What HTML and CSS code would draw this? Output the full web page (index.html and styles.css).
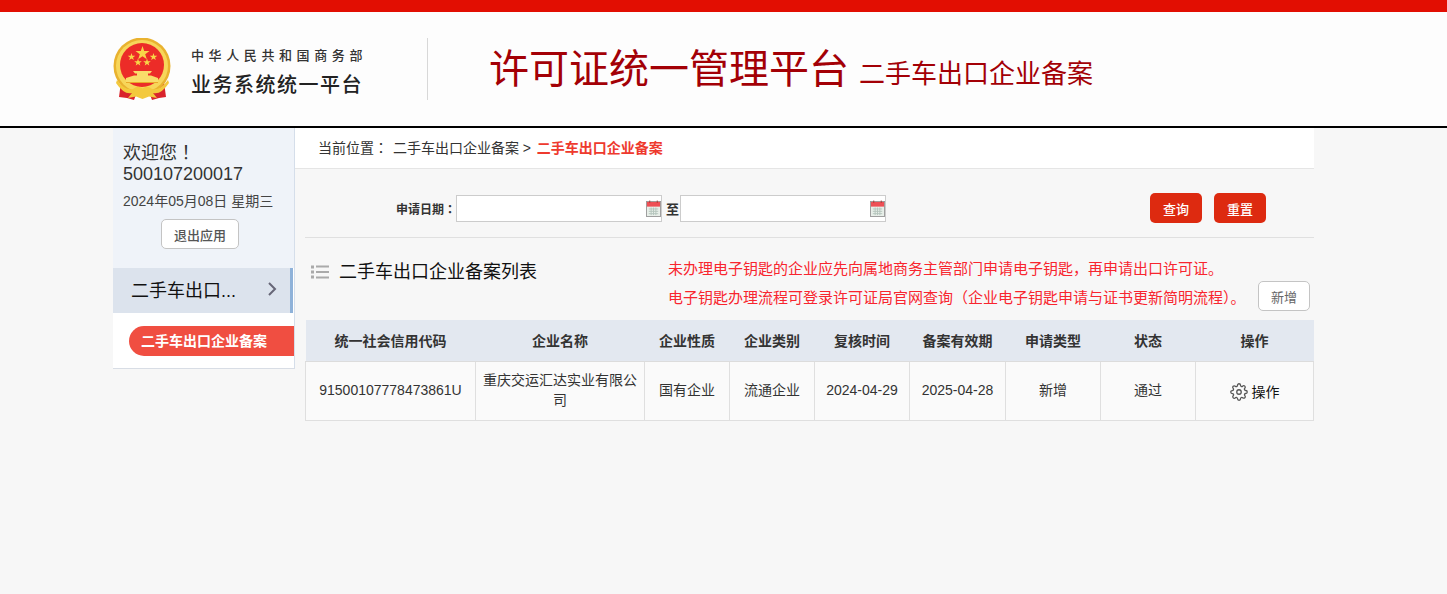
FILE: index.html
```html
<!DOCTYPE html>
<html lang="zh-CN">
<head>
  <meta charset="UTF-8" />
  <title>许可证统一管理平台</title>
  <link rel="stylesheet" href="styles.css">
</head>
<body>
  <!-- Header -->
  <div class="topbar"></div>
  <header class="header">
    <div class="logo">
      <svg class="emblem" viewBox="0 0 60 64" width="60" height="64">
        <!-- ribbons -->
        <path d="M8 44 L6 59 L14 60 L21 62 L24 54 L36 54 L39 62 L46 60 L53 59 L51 44 Z" fill="#d9232c"/>
        <!-- ring -->
        <circle cx="29" cy="28" r="28.500" fill="#e9b22f"/>
        <circle cx="29" cy="28" r="26" fill="#f7d65a"/>
        <circle cx="29" cy="27" r="22" fill="#ec2c28"/>
        <!-- stars -->
        <polygon points="29.500,8 31.200,13 36.500,13 32.200,16.200 33.800,21.300 29.500,18.200 25.200,21.300 26.800,16.200 22.500,13 27.800,13" fill="#f8d648"/>
        <polygon points="18.500,15 19.400,17.700 22.300,17.700 20,19.400 20.800,22 18.500,20.400 16.200,22 17,19.400 14.700,17.700 17.600,17.700" fill="#f8d648"/>
        <polygon points="40.500,15 41.400,17.700 44.300,17.700 42,19.400 42.800,22 40.500,20.400 38.200,22 39,19.400 36.700,17.700 39.600,17.700" fill="#f8d648"/>
        <polygon points="25,20.500 25.900,23.200 28.800,23.200 26.500,24.900 27.300,27.500 25,25.900 22.700,27.500 23.500,24.900 21.200,23.200 24.100,23.200" fill="#f8d648"/>
        <polygon points="34,20.500 34.900,23.200 37.800,23.200 35.500,24.900 36.300,27.500 34,25.900 31.700,27.500 32.500,24.900 30.200,23.200 33.100,23.200" fill="#f8d648"/>
        <!-- gate -->
        <path d="M20 33 H39 L37 35.500 H35 V37.500 H38 L45 40 V44 H13 V40 L21 37.500 H24 V35.500 H22 Z" fill="#f9dc6a"/>
        <path d="M13 44 H45 V45 H13 Z" fill="#e9a92a"/>
        <!-- swag and bow -->
        <path d="M4 42 Q12 53 20 51 Q25 47 29.500 50.500 Q34 47 39 51 Q47 53 55 42 L56 45 Q48 57 40 55 L44 60 L36 58.500 L29.500 61 L23 58.500 L15 60 L19 55 Q11 57 3 45 Z" fill="#f3c93d"/>
      </svg>
      <div class="logo-text">
        <div class="logo-org">中华人民共和国商务部</div>
        <div class="logo-name">业务系统统一平台</div>
      </div>
    </div>
    <div class="title">
      <span class="title-main">许可证统一管理平台</span>
      <span class="title-sub">二手车出口企业备案</span>
    </div>
  </header>

  <div class="wrap">
    <!-- Sidebar -->
    <aside class="side">
      <div class="user">
        <div class="user-name">欢迎您<span class="punct" lang="zh-TW">！</span><br>500107200017</div>
        <div class="user-date">2024年05月08日 星期三</div>
        <button class="btn-exit">退出应用</button>
      </div>
      <div class="menu-item">
        <span class="menu-text">二手车出口...</span>
        <svg class="menu-arrow" viewBox="0 0 10 16" width="10" height="16"><path d="M2 2 L8 8 L2 14" fill="none" stroke="#667" stroke-width="2"/></svg>
      </div>
      <div class="submenu">
        <div class="pill">二手车出口企业备案</div>
      </div>
    </aside>

    <!-- Main -->
    <main class="main">
      <div class="crumb">
        当前位置<span class="punct" lang="zh-TW">：</span> <span class="crumb-link">二手车出口企业备案</span> &gt; <b class="crumb-cur">二手车出口企业备案</b>
      </div>

      <div class="content">
        <form class="search">
          <label class="search-label">申请日期<span class="punct" lang="zh-TW">：</span></label>
          <div class="date-input"><svg class="cal" viewBox="0 0 16 18" width="15" height="17">
            <rect x="0.500" y="1.500" width="15" height="16" fill="#e8efe9" stroke="#999"/>
            <rect x="1" y="2" width="14" height="5" fill="#ee4f55"/>
            <path d="M3 9.500H13M3 12H13M3 14.500H13M5.500 8V16M8 8V16M10.500 8V16" stroke="#b4c4bc" stroke-width="1"/>
            <path d="M4 0.500V3M12 0.500V3" stroke="#a33"/>
          </svg></div>
          <span class="search-to">至</span>
          <div class="date-input"><svg class="cal" viewBox="0 0 16 18" width="15" height="17">
            <rect x="0.500" y="1.500" width="15" height="16" fill="#e8efe9" stroke="#999"/>
            <rect x="1" y="2" width="14" height="5" fill="#ee4f55"/>
            <path d="M3 9.500H13M3 12H13M3 14.500H13M5.500 8V16M8 8V16M10.500 8V16" stroke="#b4c4bc" stroke-width="1"/>
            <path d="M4 0.500V3M12 0.500V3" stroke="#a33"/>
          </svg></div>
          <div class="search-btns">
            <button type="button" class="btn-red">查询</button>
            <button type="button" class="btn-red">重置</button>
          </div>
        </form>

        <div class="list-head">
          <div class="list-title">
            <svg class="list-icon" viewBox="0 0 19 16" width="19" height="16">
              <path d="M1 1.500H4V4.500H1ZM1 6.500H4V9.500H1ZM1 11.500H4V14.500H1Z" fill="#aaa"/>
              <path d="M6 2.500H19M6 8H19M6 13.500H19" stroke="#aaa" stroke-width="2"/>
            </svg>
            <span>二手车出口企业备案列表</span>
          </div>
          <div class="notice">
            <p>未办理电子钥匙的企业应先向属地商务主管部门申请电子钥匙，再申请出口许可证。</p>
            <p>电子钥匙办理流程可登录许可证局官网查询<span class="punct" lang="zh-TW">（</span>企业电子钥匙申请与证书更新简明流程<span class="punct" lang="zh-TW">）</span>。</p>
          </div>
          <button class="btn-add">新增</button>
        </div>

        <table class="grid">
          <colgroup>
            <col><col><col><col><col><col><col><col><col>
          </colgroup>
          <thead>
            <tr>
              <th>统一社会信用代码</th><th>企业名称</th><th>企业性质</th><th>企业类别</th><th>复核时间</th><th>备案有效期</th><th>申请类型</th><th>状态</th><th>操作</th>
            </tr>
          </thead>
          <tbody>
            <tr>
              <td>91500107778473861U</td>
              <td>重庆交运汇达实业有限公司</td>
              <td>国有企业</td>
              <td>流通企业</td>
              <td>2024-04-29</td>
              <td>2025-04-28</td>
              <td>新增</td>
              <td>通过</td>
              <td class="cell-op">
                <span class="op">
                  <svg viewBox="0 0 24 24" width="18" height="18" fill="none" stroke="#555" stroke-width="1.700" stroke-linecap="round" stroke-linejoin="round">
                    <circle cx="12" cy="12" r="3"/>
                    <path d="M19.400 15a1.650 1.650 0 0 0 .33 1.820l.06.06a2 2 0 0 1 0 2.830 2 2 0 0 1-2.830 0l-.06-.06a1.650 1.650 0 0 0-1.820-.33 1.650 1.650 0 0 0-1 1.510V21a2 2 0 0 1-2 2 2 2 0 0 1-2-2v-.09A1.650 1.650 0 0 0 9 19.400a1.650 1.650 0 0 0-1.820.33l-.06.06a2 2 0 0 1-2.830 0 2 2 0 0 1 0-2.830l.06-.06a1.650 1.650 0 0 0 .33-1.820 1.650 1.650 0 0 0-1.510-1H3a2 2 0 0 1-2-2 2 2 0 0 1 2-2h.09A1.650 1.650 0 0 0 4.600 9a1.650 1.650 0 0 0-.33-1.820l-.06-.06a2 2 0 0 1 0-2.830 2 2 0 0 1 2.830 0l.06.06a1.650 1.650 0 0 0 1.820.33H9a1.650 1.650 0 0 0 1-1.510V3a2 2 0 0 1 2-2 2 2 0 0 1 2 2v.09a1.650 1.650 0 0 0 1 1.510 1.650 1.650 0 0 0 1.820-.33l.06-.06a2 2 0 0 1 2.830 0 2 2 0 0 1 0 2.830l-.06.06a1.650 1.650 0 0 0-.33 1.820V9a1.650 1.650 0 0 0 1.510 1H21a2 2 0 0 1 2 2 2 2 0 0 1-2 2h-.09a1.650 1.650 0 0 0-1.510 1z"/>
                  </svg>
                  <span>操作</span>
                </span>
              </td>
            </tr>
          </tbody>
        </table>
      </div>
    </main>
  </div>
</body>
</html>
```

FILE: styles.css
```css
*, *::before, *::after {
  box-sizing: border-box;
}

html, body {
  height: 100%;
}

body {
  margin: 0;
  font-family: "Liberation Sans", "Noto Sans CJK SC", sans-serif;
  font-size: 14px;
  color: #333;
  background-color: #f7f7f7;
}

/* full-width punctuation sits centred in the cell */
.punct {
  font-family: "Noto Sans CJK TC", sans-serif;
}

/* Header */
.topbar {
  height: 12px;
  background: #e20e02;
}

.header {
  display: flex;
  align-items: center;
  height: 116px;
  padding-left: 113px;
  background: #fdfdfd;
  border-bottom: 2px solid #000;
}

.logo {
  display: flex;
  align-items: center;
  width: 315px;
  height: 62px;
  border-right: 1px solid #d8d8d8;
}

.emblem {
  margin: 2px 18px 0 0;
}

.logo-text {
  padding-top: 6px;
}

.logo-org {
  font-size: 13px;
  font-weight: 500;
  letter-spacing: 4.600px;
  line-height: 18px;
  color: #333;
}

.logo-name {
  margin-top: 7px;
  font-size: 20px;
  font-weight: 500;
  letter-spacing: 1.500px;
  line-height: 26px;
  color: #222;
}

.title {
  display: flex;
  align-items: baseline;
  margin-left: 61px;
  color: #a30006;
}

.title-main {
  font-size: 40px;
  line-height: 56px;
}

.title-sub {
  margin-left: 10px;
  font-size: 26px;
}

/* Layout */
.wrap {
  display: flex;
  align-items: flex-start;
  width: 1200px;
  margin-left: 113px;
}

.side {
  flex: none;
  width: 182px;
  border-right: 1px solid #d5deea;
  border-bottom: 1px solid #d8dde5;
  background: #fff;
}

.user {
  height: 140px;
  padding: 13px 0 0 10px;
  background: #eff3f9;
}

.user-name {
  font-size: 18px;
  line-height: 21px;
  color: #333;
}

.user-date {
  margin-top: 6px;
  font-size: 14px;
  line-height: 20px;
  color: #444;
}

.btn-exit {
  display: block;
  width: 78px;
  height: 30px;
  margin: 8px 0 0 38px;
  padding: 0;
  border: 1px solid #c4c4c4;
  border-radius: 5px;
  background: #fff;
  font-family: inherit;
  font-size: 13px;
  font-weight: 500;
  color: #555;
}

.menu-item {
  display: flex;
  align-items: center;
  justify-content: space-between;
  height: 45px;
  margin-right: 1px;
  padding: 0 13px 3px 18px;
  background: #dce3ed;
  border-right: 3px solid #8fb2d9;
}

.menu-text {
  font-size: 18px;
  color: #111;
}

.submenu {
  height: 55px;
  padding: 13px 0 0 16px;
}

.pill {
  height: 30px;
  padding-left: 12px;
  border-radius: 15px 0 0 15px;
  background: #f04e41;
  font-size: 14px;
  font-weight: 700;
  line-height: 30px;
  color: #fff;
}

.main {
  flex: 1;
}

.crumb {
  height: 41px;
  padding-left: 23px;
  background: #fff;
  border-bottom: 1px solid #e5e5e5;
  font-size: 14px;
  line-height: 38px;
  color: #333;
}

.crumb-link {
  margin-left: 1px;
}

.crumb-cur {
  margin-left: 2px;
  color: #ee3a2e;
}

.content {
  padding-left: 10px;
}

/* Search form */
.search {
  display: flex;
  align-items: center;
  height: 69px;
  padding: 10px 0 0 91px;
  border-bottom: 1px solid #e0e0e0;
  font-size: 12px;
}

.search-label {
  font-weight: 700;
  color: #333;
}

.date-input {
  display: flex;
  align-items: center;
  justify-content: flex-end;
  width: 206px;
  height: 27px;
  background: #fff;
  border: 1px solid #ccc;
}

.search-to {
  margin: 0 1px 0 4px;
  font-weight: 700;
  font-size: 13px;
}

.search-btns {
  display: flex;
  gap: 12px;
  margin-left: 264px;
}

.btn-red {
  width: 52px;
  height: 30px;
  padding: 0;
  border: 0;
  border-radius: 5px;
  background: #dd2a10;
  font-family: inherit;
  font-size: 13px;
  font-weight: 500;
  color: #fff;
}

/* List header */
.list-head {
  display: flex;
  align-items: flex-start;
  height: 82px;
}

.list-title {
  display: flex;
  align-items: center;
  width: 363px;
  padding: 20px 0 0 5px;
  font-size: 18px;
  line-height: 28px;
  color: #111;
}

.list-icon {
  margin-right: 10px;
}

.notice {
  padding-top: 17px;
  font-size: 15px;
  line-height: 28px;
  color: #f8252e;
}

.notice p {
  margin: 0;
  white-space: nowrap;
}

.btn-add {
  width: 52px;
  height: 30px;
  margin: 43px 4px 0 auto;
  padding: 0;
  border: 1px solid #c4c4c4;
  border-radius: 5px;
  background: #fff;
  font-family: inherit;
  font-size: 13px;
  color: #666;
}

/* Table */
.grid {
  table-layout: fixed;
  width: 1008px;
  border-collapse: collapse;
  font-size: 14px;
}

.grid col:nth-child(1) { width: 170px; }
.grid col:nth-child(2) { width: 169px; }
.grid col:nth-child(3) { width: 85px; }
.grid col:nth-child(4) { width: 85px; }
.grid col:nth-child(5) { width: 95px; }
.grid col:nth-child(6) { width: 96px; }
.grid col:nth-child(7) { width: 95px; }
.grid col:nth-child(8) { width: 95px; }
.grid col:nth-child(9) { width: 118px; }

.grid th {
  height: 41px;
  padding: 0;
  background: #e3e8f0;
  border-bottom: 1px solid #dcdcdc;
  font-weight: 700;
  color: #333;
}

.grid td {
  height: 59px;
  padding: 0 5px 2px;
  background: #fafafa;
  border: 1px solid #dfdfdf;
  line-height: 20px;
  text-align: center;
  color: #333;
}

.grid td.cell-op {
  padding: 6px 0 0;
}

.op {
  display: inline-flex;
  align-items: center;
  gap: 4px;
  color: #111;
}
```
